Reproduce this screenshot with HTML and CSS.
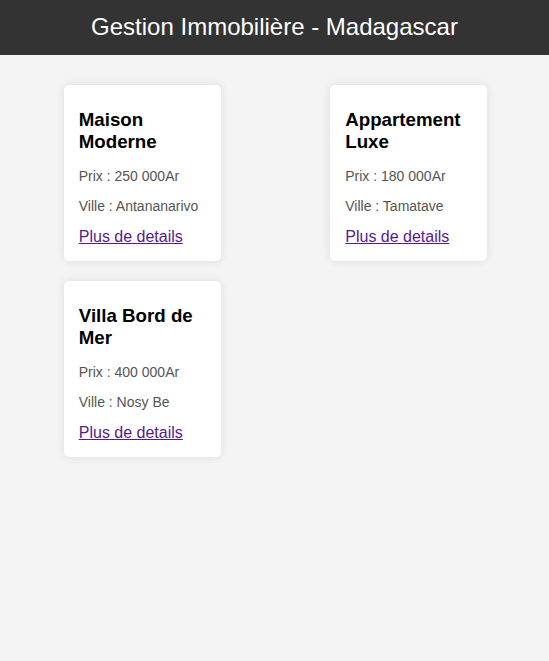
FILE: index.html
```html
<!DOCTYPE html>
<html lang="fr">
<head>
<meta charset="utf-8">
<title>Gestion Immobilière - Madagascar</title>
<link rel="stylesheet" href="styles.css">
</head>
<body>
<header class="site-header">
  <h1 class="site-title">Gestion Immobilière - Madagascar</h1>
</header>
<main class="listing">
  <article class="card">
    <h3 class="card-title">Maison Moderne</h3>
    <p class="card-text">Prix : 250 000Ar</p>
    <p class="card-text">Ville : Antananarivo</p>
    <a class="card-link" href="#">Plus de details</a>
  </article>
  <article class="card">
    <h3 class="card-title">Appartement Luxe</h3>
    <p class="card-text">Prix : 180 000Ar</p>
    <p class="card-text">Ville : Tamatave</p>
    <a class="card-link" href="#">Plus de details</a>
  </article>
  <article class="card">
    <h3 class="card-title">Villa Bord de Mer</h3>
    <p class="card-text">Prix : 400 000Ar</p>
    <p class="card-text">Ville : Nosy Be</p>
    <a class="card-link" href="#">Plus de details</a>
  </article>
</main>
</body>
</html>
```
FILE: styles.css
```css
body {
  margin: 0;
  background: #f4f4f4;
  font-family: "Liberation Sans", Arial, sans-serif;
  color: #000;
}

.site-header {
  background: #333333;
  color: #ffffff;
  padding: 13px 0 14px;
  text-align: center;
}

.site-title {
  margin: 0;
  font-size: 24px;
  font-weight: normal;
  line-height: 28px;
}

.listing {
  display: grid;
  grid-template-columns: repeat(2, 1fr);
  gap: 20px;
  padding: 30px 17px 30px 19px;
  justify-items: center;
  align-items: start;
}

.card {
  box-sizing: border-box;
  width: 157px;
  background: #ffffff;
  padding: 15px;
  border-radius: 5px;
  box-shadow: 0 0 10px rgba(0, 0, 0, 0.1);
}

.card-title {
  margin: 9px 0 15px;
  font-size: 18.72px;
  font-weight: bold;
}

.card-text {
  margin: 14px 0;
  font-size: 14px;
  color: #555555;
}

.card-link {
  font-size: 16px;
  color: #551a8b;
}
```
